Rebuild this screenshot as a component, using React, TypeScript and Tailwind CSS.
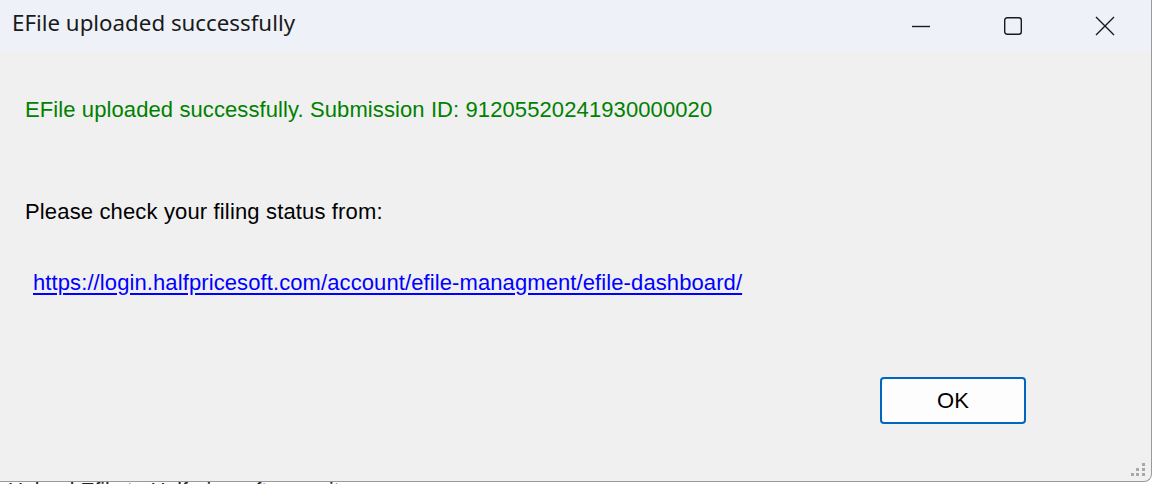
import React from "react";

export default function App() {
  return (
    <div className="relative w-[1154px] h-[484px] overflow-hidden bg-white">
      <div className="relative z-10 w-[1152px] h-[482px] bg-[#f0f0f0] border-r border-b border-[#9a9a9a] rounded-br-[8px] overflow-hidden flex flex-col">
        {/* title bar */}
        <div className="h-[51px] bg-[#eef2f8] flex items-center shrink-0">
          <div className="pl-[12px] text-[22.3px] text-[#1a1a1a] font-['Noto_Sans','Open_Sans',sans-serif] flex-1 leading-none pb-[4px]">
            EFile uploaded successfully
          </div>
          <div className="flex h-full items-center">
            <div className="w-[92px] h-full flex items-center justify-center">
              <svg width="20" height="20" viewBox="0 0 20 20"><path d="M1 10.5h18" stroke="#1a1a1a" strokeWidth="1.4" /></svg>
            </div>
            <div className="w-[92px] h-full flex items-center justify-center">
              <svg width="20" height="20" viewBox="0 0 20 20"><rect x="1.7" y="1.7" width="16.6" height="16.6" rx="2.5" fill="none" stroke="#1a1a1a" strokeWidth="1.4" /></svg>
            </div>
            <div className="w-[92px] h-full flex items-center justify-center">
              <svg width="20" height="20" viewBox="0 0 20 20"><path d="M1 1L19 19M19 1L1 19" stroke="#1a1a1a" strokeWidth="1.4" /></svg>
            </div>
          </div>
        </div>
        {/* body */}
        <div className="flex-1 flex flex-col font-['Liberation_Sans',Arial,sans-serif] text-[22px] tracking-[0.1px] leading-none">
          <div className="pl-[25px] pt-[48px] text-[#008000]">
            EFile uploaded successfully. Submission ID: 91205520241930000020
          </div>
          <div className="pl-[25px] pt-[80px] text-[#000000] tracking-[0.15px]">
            Please check your filing status from:
          </div>
          <div className="pl-[33px] pt-[49px]">
            <span className="text-[#0000ff] underline underline-offset-[3px]">
              https://login.halfpricesoft.com/account/efile-managment/efile-dashboard/
            </span>
          </div>
          <div className="flex justify-end pr-[125px] pt-[83px]">
            <button className="w-[146px] h-[47px] rounded-[4px] border-2 border-[#0067c0] bg-[#fdfdfd] text-[22px] text-black font-['Liberation_Sans',Arial,sans-serif]">
              OK
            </button>
          </div>
        </div>
        {/* resize grip */}
        <div className="absolute right-[6px] bottom-[5px] grid grid-cols-3 gap-[2px] w-[14px]">
          <span />
          <span />
          <span className="w-[3px] h-[3px] bg-[#a8a8a8]" />
          <span />
          <span className="w-[3px] h-[3px] bg-[#a8a8a8]" />
          <span className="w-[3px] h-[3px] bg-[#a8a8a8]" />
          <span className="w-[3px] h-[3px] bg-[#a8a8a8]" />
          <span className="w-[3px] h-[3px] bg-[#a8a8a8]" />
          <span className="w-[3px] h-[3px] bg-[#a8a8a8]" />
        </div>
      </div>
      <div className="relative z-0 pl-[8px] -mt-[3px] text-[21px] text-[#222] font-['Liberation_Sans',Arial,sans-serif] leading-none">
        Upload Efile to Halfpricesoft.com site
      </div>
    </div>
  );
}
